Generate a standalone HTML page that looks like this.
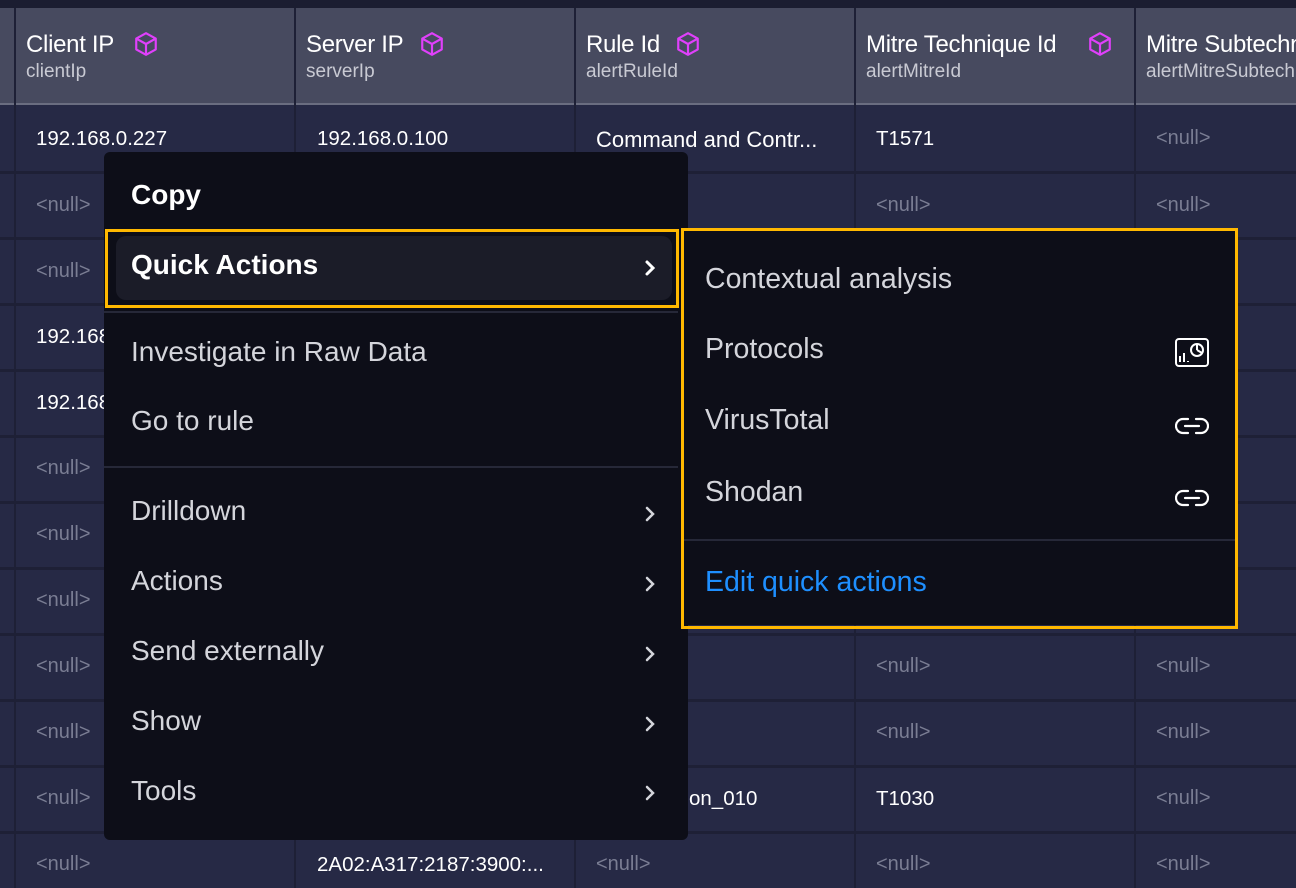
<!DOCTYPE html>
<html><head><style>
*{margin:0;padding:0;box-sizing:border-box}
body{width:1296px;height:888px;overflow:hidden;background:#262945;font-family:"Liberation Sans",sans-serif;position:relative}
.a{position:absolute;white-space:nowrap}
.top{left:0;top:0;width:1296px;height:8px;background:#1b1d31}
.hdr{left:0;top:8px;width:1296px;height:97px;background:#474a5f;border-bottom:2px solid #6a6d80}
.vl{top:8px;width:2px;height:880px;background:#1e2036}
.hl{left:0;width:1296px;height:3px;background:#1e2036}
.ht{font-size:24px;color:#fff;top:31px;letter-spacing:-0.3px}
.hs{font-size:19px;color:#c9cad3;top:61px}
.c{font-size:20.5px;color:#fff}
.n{font-size:20px;color:#7a7d93}
.menu{left:104px;top:152px;width:584px;height:688px;background:#0d0e18;border-radius:6px}
.mi{font-size:28px;color:#d4d5db;left:131px}
.chev{left:641px;width:18px;height:18px}
.sep{height:2px;background:#262838}
.y{border:3px solid #ffb800}
.sub{left:684px;top:231px;width:551px;height:394px;background:#0d0e18}
.si{font-size:28.5px;color:#d4d5db;left:705px}
</style></head><body>
<div class="a top"></div>
<div class="a hdr"></div>
<div class="a vl" style="left:14px"></div>
<div class="a vl" style="left:294px"></div>
<div class="a vl" style="left:574px"></div>
<div class="a vl" style="left:854px"></div>
<div class="a vl" style="left:1134px"></div>
<div class="a hl" style="top:171px"></div><div class="a hl" style="top:237px"></div><div class="a hl" style="top:303px"></div><div class="a hl" style="top:369px"></div><div class="a hl" style="top:435px"></div><div class="a hl" style="top:501px"></div><div class="a hl" style="top:567px"></div><div class="a hl" style="top:633px"></div><div class="a hl" style="top:699px"></div><div class="a hl" style="top:765px"></div><div class="a hl" style="top:831px"></div>

<div class="a ht" style="left:26px">Client IP</div><div class="a hs" style="left:26px">clientIp</div>
<div class="a ht" style="left:306px">Server IP</div><div class="a hs" style="left:306px">serverIp</div>
<div class="a ht" style="left:586px">Rule Id</div><div class="a hs" style="left:586px">alertRuleId</div>
<div class="a ht" style="left:866px">Mitre Technique Id</div><div class="a hs" style="left:866px">alertMitreId</div>
<div class="a ht" style="left:1146px">Mitre Subtechnique</div><div class="a hs" style="left:1146px">alertMitreSubtechnique</div>
<svg class="a" style="left:133px;top:31px" width="26" height="26" viewBox="0 0 24 24" fill="none" stroke="#e040fb" stroke-width="2" stroke-linejoin="round"><path d="M12 2l9 5v10l-9 5-9-5V7z M3 7l9 5 9-5 M12 12v10"/></svg>
<svg class="a" style="left:419px;top:31px" width="26" height="26" viewBox="0 0 24 24" fill="none" stroke="#e040fb" stroke-width="2" stroke-linejoin="round"><path d="M12 2l9 5v10l-9 5-9-5V7z M3 7l9 5 9-5 M12 12v10"/></svg>
<svg class="a" style="left:675px;top:31px" width="26" height="26" viewBox="0 0 24 24" fill="none" stroke="#e040fb" stroke-width="2" stroke-linejoin="round"><path d="M12 2l9 5v10l-9 5-9-5V7z M3 7l9 5 9-5 M12 12v10"/></svg>
<svg class="a" style="left:1087px;top:31px" width="26" height="26" viewBox="0 0 24 24" fill="none" stroke="#e040fb" stroke-width="2" stroke-linejoin="round"><path d="M12 2l9 5v10l-9 5-9-5V7z M3 7l9 5 9-5 M12 12v10"/></svg>

<div class="a c" style="left:36px;top:127px">192.168.0.227</div>
<div class="a c" style="left:317px;top:127px">192.168.0.100</div>
<div class="a c" style="left:596px;top:127px;font-size:22px">Command and Contr...</div>
<div class="a c" style="left:876px;top:127px">T1571</div>
<div class="a c" style="left:36px;top:325px">192.168</div>
<div class="a c" style="left:36px;top:391px">192.168</div>
<div class="a c" style="left:689px;top:787px">on_010</div>
<div class="a c" style="left:876px;top:787px">T1030</div>
<div class="a c" style="left:317px;top:853px">2A02:A317:2187:3900:...</div>
<div class="a n" style="left:36px;top:194px">&lt;null&gt;</div>
<div class="a n" style="left:36px;top:260px">&lt;null&gt;</div>
<div class="a n" style="left:36px;top:457px">&lt;null&gt;</div>
<div class="a n" style="left:36px;top:523px">&lt;null&gt;</div>
<div class="a n" style="left:36px;top:589px">&lt;null&gt;</div>
<div class="a n" style="left:36px;top:655px">&lt;null&gt;</div>
<div class="a n" style="left:36px;top:721px">&lt;null&gt;</div>
<div class="a n" style="left:36px;top:787px">&lt;null&gt;</div>
<div class="a n" style="left:36px;top:853px">&lt;null&gt;</div>
<div class="a n" style="left:596px;top:853px">&lt;null&gt;</div>
<div class="a n" style="left:876px;top:194px">&lt;null&gt;</div>
<div class="a n" style="left:876px;top:655px">&lt;null&gt;</div>
<div class="a n" style="left:876px;top:721px">&lt;null&gt;</div>
<div class="a n" style="left:876px;top:853px">&lt;null&gt;</div>
<div class="a n" style="left:1156px;top:127px">&lt;null&gt;</div>
<div class="a n" style="left:1156px;top:194px">&lt;null&gt;</div>
<div class="a n" style="left:1156px;top:655px">&lt;null&gt;</div>
<div class="a n" style="left:1156px;top:721px">&lt;null&gt;</div>
<div class="a n" style="left:1156px;top:787px">&lt;null&gt;</div>
<div class="a n" style="left:1156px;top:853px">&lt;null&gt;</div>

<div class="a menu"></div>
<div class="a mi" style="top:179px;color:#fff;font-weight:bold">Copy</div>
<div class="a" style="left:116px;top:236px;width:556px;height:64px;background:#1b1c28;border-radius:10px"></div>
<div class="a y" style="left:105px;top:229px;width:574px;height:79px"></div>
<div class="a mi" style="top:249px;color:#fff;font-weight:bold">Quick Actions</div>
<svg class="a chev" style="top:259px" viewBox="0 0 18 18" fill="none" stroke="#fff" stroke-width="3" stroke-linecap="round"><path d="M6 3l6 6-6 6"/></svg>
<div class="a sep" style="left:104px;top:311px;width:574px"></div>
<div class="a mi" style="top:336px">Investigate in Raw Data</div>
<div class="a mi" style="top:405px">Go to rule</div>
<div class="a sep" style="left:104px;top:466px;width:574px"></div>
<div class="a mi" style="top:495px">Drilldown</div><svg class="a chev" style="top:505px" viewBox="0 0 18 18" fill="none" stroke="#d4d5db" stroke-width="2.5" stroke-linecap="round"><path d="M6 3l6 6-6 6"/></svg>
<div class="a mi" style="top:565px">Actions</div><svg class="a chev" style="top:575px" viewBox="0 0 18 18" fill="none" stroke="#d4d5db" stroke-width="2.5" stroke-linecap="round"><path d="M6 3l6 6-6 6"/></svg>
<div class="a mi" style="top:635px">Send externally</div><svg class="a chev" style="top:645px" viewBox="0 0 18 18" fill="none" stroke="#d4d5db" stroke-width="2.5" stroke-linecap="round"><path d="M6 3l6 6-6 6"/></svg>
<div class="a mi" style="top:705px">Show</div><svg class="a chev" style="top:715px" viewBox="0 0 18 18" fill="none" stroke="#d4d5db" stroke-width="2.5" stroke-linecap="round"><path d="M6 3l6 6-6 6"/></svg>
<div class="a mi" style="top:775px">Tools</div><svg class="a chev" style="top:784px" viewBox="0 0 18 18" fill="none" stroke="#d4d5db" stroke-width="2.5" stroke-linecap="round"><path d="M6 3l6 6-6 6"/></svg>

<div class="a sub"></div>
<div class="a y" style="left:681px;top:228px;width:557px;height:401px"></div>
<div class="a si" style="top:263px">Contextual analysis</div>
<div class="a si" style="top:333px">Protocols</div>
<div class="a si" style="top:404px">VirusTotal</div>
<div class="a si" style="top:476px">Shodan</div>
<div class="a sep" style="left:684px;top:539px;width:551px"></div>
<div class="a si" style="top:566px;color:#1e8fff">Edit quick actions</div>
<svg class="a" style="left:1175px;top:338px" width="34" height="30" viewBox="0 0 34 30" fill="none" stroke="#fff" stroke-width="2"><rect x="1" y="1" width="32" height="27" rx="3"/><path d="M5 24v-6M9 24v-9M13 24v-1"/><circle cx="22" cy="12" r="6"/><path d="M22 12V6M22 12l5 3"/></svg>
<svg class="a" style="left:1175px;top:417px" width="34" height="18" viewBox="0 0 34 18" fill="none" stroke="#fff" stroke-width="2.2" stroke-linecap="round"><path d="M13 2H8a7 7 0 0 0 0 14h5M21 2h5a7 7 0 0 1 0 14h-5M10 9h14"/></svg>
<svg class="a" style="left:1175px;top:489px" width="34" height="18" viewBox="0 0 34 18" fill="none" stroke="#fff" stroke-width="2.2" stroke-linecap="round"><path d="M13 2H8a7 7 0 0 0 0 14h5M21 2h5a7 7 0 0 1 0 14h-5M10 9h14"/></svg>
</body></html>
